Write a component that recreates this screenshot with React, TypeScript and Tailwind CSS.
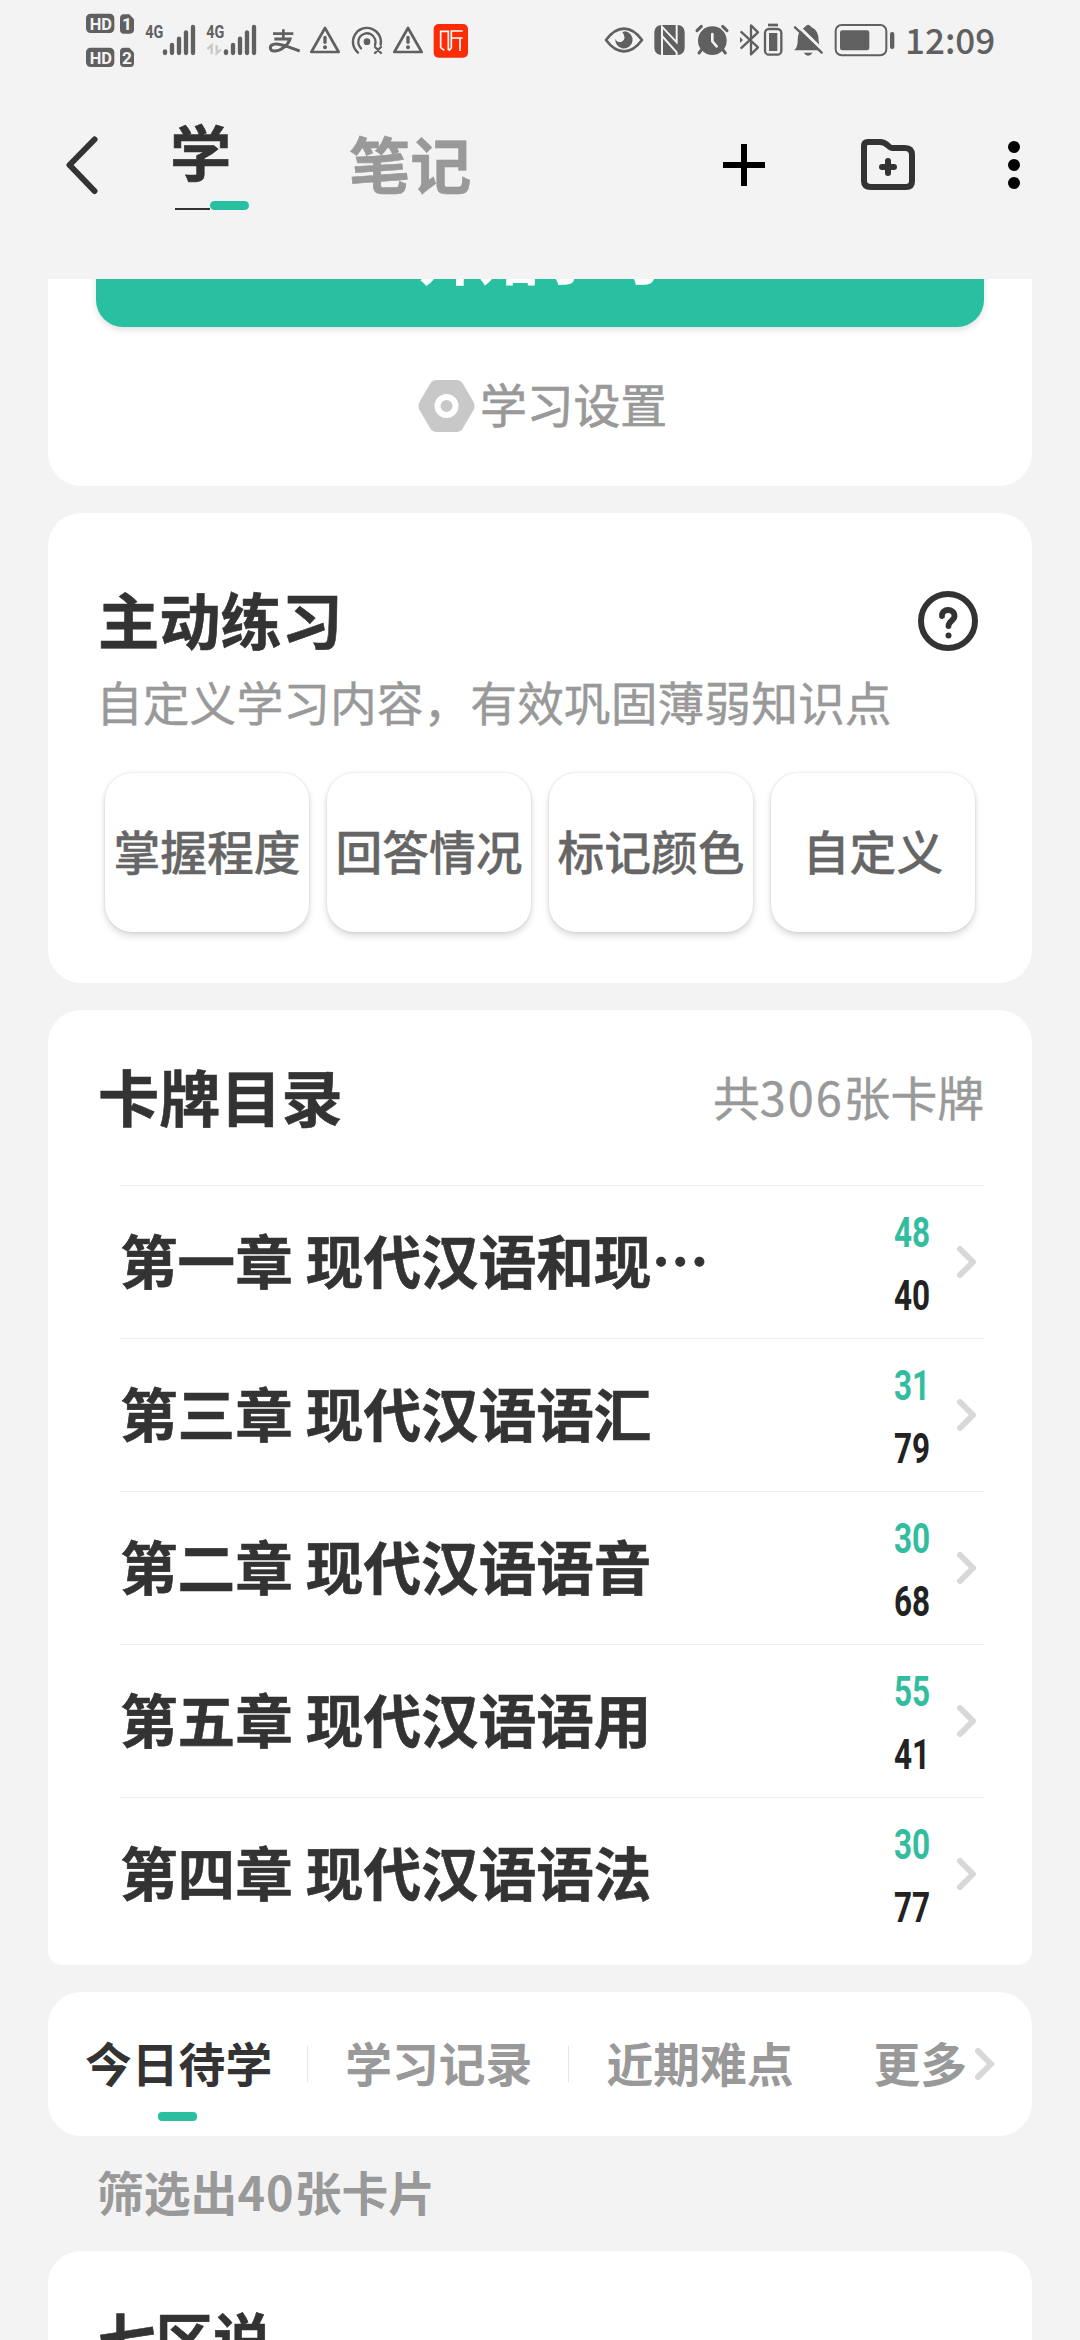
import type { ReactNode } from "react";

interface Chapter {
  title: string;
  known: number;
  left: number;
}

const chapters: Chapter[] = [
  { title: "第一章 现代汉语和现⋯", known: 48, left: 40 },
  { title: "第三章 现代汉语语汇", known: 31, left: 79 },
  { title: "第二章 现代汉语语音", known: 30, left: 68 },
  { title: "第五章 现代汉语语用", known: 55, left: 41 },
  { title: "第四章 现代汉语语法", known: 30, left: 77 },
];

const practiceModes = ["掌握程度", "回答情况", "标记颜色", "自定义"];

const signalBars = [
  { x: 315, top: 148 },
  { x: 336, top: 129 },
  { x: 357, top: 110 },
  { x: 378, top: 91 },
  { x: 399, top: 75 },
];

function SignalBars() {
  return (
    <g stroke="#606060" strokeWidth="13" strokeLinecap="round">
      {signalBars.map((bar) => (
        <line key={bar.x} x1={bar.x} x2={bar.x} y1={bar.top + 6} y2="159" />
      ))}
    </g>
  );
}

function Warning() {
  return (
    <svg className="h-[80px] w-[40px]" viewBox="735 0 120 240" fill="none" stroke="#606060">
      <path d="M795 84 L836 156 H754 Z" strokeWidth="8" strokeLinejoin="round" />
      <path d="M795 112 V127" strokeWidth="10" strokeLinecap="round" />
      <circle cx="795" cy="142" r="6" fill="#606060" stroke="none" />
    </svg>
  );
}

function StatusBar() {
  return (
    <div className="flex h-[80px] shrink-0 pl-[80px] text-[#606060]">
      <svg className="h-[80px] w-[60px]" viewBox="60 0 180 240" fontFamily="Roboto" fontWeight="700" fontSize="52">
        <rect x="78" y="41" width="85" height="58" rx="14" fill="#606060" />
        <path d="M192 43 H208 L222 58 V88 Q222 101 210 101 H192 Q180 101 180 89 V55 Q180 43 192 43 Z" fill="#606060" />
        <text x="89" y="89" fill="#f3f3f3" textLength="67" lengthAdjust="spacingAndGlyphs">HD</text>
        <text x="201" y="90" fill="#f3f3f3" textAnchor="middle">1</text>
        <rect x="78" y="143" width="85" height="58" rx="14" fill="#606060" />
        <path d="M192 143 H208 L222 158 V188 Q222 201 210 201 H192 Q180 201 180 189 V155 Q180 143 192 143 Z" fill="#606060" />
        <text x="89" y="191" fill="#f3f3f3" textLength="67" lengthAdjust="spacingAndGlyphs">HD</text>
        <text x="201" y="191" fill="#f3f3f3" textAnchor="middle">2</text>
      </svg>
      <svg className="h-[80px] w-[60px]" viewBox="240 0 180 240">
        <text x="256" y="114" fill="#606060" fontFamily="Roboto" fontWeight="700" fontSize="56" textLength="54" lengthAdjust="spacingAndGlyphs">4G</text>
        <SignalBars />
      </svg>
      <svg className="h-[80px] w-[63px]" viewBox="420 0 189 240">
        <text x="439" y="114" fill="#606060" fontFamily="Roboto" fontWeight="700" fontSize="56" textLength="54" lengthAdjust="spacingAndGlyphs">4G</text>
        <path d="M442 147 L455 136 V163 M470 136 V160 L483 149" fill="none" stroke="#c9c9c9" strokeWidth="7" />
        <g transform="translate(183 0)">
          <SignalBars />
        </g>
      </svg>
      <svg className="h-[80px] w-[42px]" viewBox="609 0 126 240" fill="none" stroke="#606060">
        <path d="M639 101 H700 M670 88 V117" strokeWidth="8" />
        <path d="M643 117 H690 C684 136 663 153 643 153 C628 153 627 137 640 133 C660 128 685 142 719 153" strokeWidth="9" />
      </svg>
      <Warning />
      <svg className="h-[80px] w-[43px]" viewBox="855 0 129 240" fill="none" stroke="#606060" strokeWidth="7" strokeLinecap="round">
        <circle cx="921" cy="125" r="10" fill="#606060" stroke="none" />
        <path d="M903 145 A26 26 0 1 1 945 135" />
        <path d="M894 158 A42 42 0 1 1 962 134" />
        <path d="M945 141 L963 159 M963 141 L945 159" />
      </svg>
      <Warning />
      <svg className="ml-[2px] h-[80px] w-[42px]" viewBox="1110 0 126 240" fill="none" stroke="#fff" strokeWidth="5">
        <rect x="1121" y="72" width="103" height="101" rx="15" fill="#fb2c06" stroke="none" />
        <path d="M1153 151 L1142 143 V94 H1165 V151 M1208 93 H1174 V143 L1167 152 M1174 114 H1208 M1200 114 V153" />
      </svg>

      <svg className="ml-[128px] h-[80px] w-[48px]" viewBox="60 0 144 240" fill="none" stroke="#606060">
        <path d="M78 120 Q103 86 132 86 Q161 86 186 120 Q161 154 132 154 Q103 154 78 120 Z" strokeWidth="8" strokeLinejoin="round" />
        <path d="M136 94 A26 26 0 1 1 106 116 Q110 128 124 126 Q142 118 127 96 Z" fill="#606060" stroke="none" />
      </svg>
      <svg className="h-[80px] w-[42px]" viewBox="204 0 126 240">
        <rect x="223" y="75" width="91" height="90" rx="21" fill="#606060" />
        <path d="M246 165 V80 L290 127 V75" fill="none" stroke="#f3f3f3" strokeWidth="6" />
        <path d="M246 108 L290 157 V165" fill="none" stroke="#f3f3f3" strokeWidth="6" />
      </svg>
      <svg className="h-[80px] w-[44px]" viewBox="330 0 132 240" fill="none" stroke="#606060" strokeWidth="9" strokeLinecap="round">
        <circle cx="397" cy="122" r="43" fill="#606060" stroke="none" />
        <path d="M351 92 L364 79 M441 92 L428 79 M363 151 L357 159 M430 151 L436 159" />
        <path d="M397 102 V124 L410 139" stroke="#f3f3f3" strokeWidth="8" />
      </svg>
      <svg className="h-[80px] w-[54px]" viewBox="462 0 162 240" fill="none" stroke="#606060" strokeWidth="7">
        <path d="M482 94 L534 142 L513 163 V76 L534 97 L482 146" strokeLinejoin="round" />
        <path d="M480 111 L489 120 L480 129 Z" fill="#606060" stroke="none" />
        <rect x="555" y="87" width="49" height="77" rx="12" />
        <path d="M564 75 H594" strokeWidth="8" />
        <rect x="567" y="99" width="25" height="54" fill="#606060" stroke="none" />
      </svg>
      <svg className="h-[80px] w-[40px]" viewBox="624 0 120 240">
        <path d="M642 151 Q653 143 653 123 Q652 91 674 82 Q684 66 695 82 Q716 91 716 122 Q717 142 727 151 Z M671 158 H698 Q684 176 671 158 Z" fill="#606060" />
        <path d="M650 74 L734 156" stroke="#f3f3f3" strokeWidth="9" />
        <path d="M645 82 L725 158" stroke="#606060" strokeWidth="7" strokeLinecap="round" />
      </svg>
      <svg className="h-[80px] w-[70px]" viewBox="744 0 210 240">
        <rect x="767" y="75" width="152" height="91" rx="18" fill="none" stroke="#606060" strokeWidth="6" />
        <rect x="780" y="91" width="88" height="60" rx="7" fill="#606060" />
        <rect x="930" y="96" width="13" height="51" rx="6" fill="#606060" />
      </svg>
      <span className="ml-[7px] text-[35px] leading-[77px] font-medium">12:09</span>
    </div>
  );
}

function Header() {
  return (
    <header className="flex h-[170px] shrink-0 items-center">
      <svg className="ml-[63px] h-[60px] w-[37px]" viewBox="0 0 37 60" fill="none" stroke="#333" strokeWidth="6" strokeLinecap="round" strokeLinejoin="round">
        <path d="M31.500 4.500 L6.500 30 L31.500 56" />
      </svg>
      <div className="relative ml-[70px] h-[90px] w-[79px]">
        <span className="block text-[61.200px] leading-[62px] font-bold text-[#333] [-webkit-text-stroke:0.6px]">学</span>
        <span className="absolute top-[88px] left-[5px] h-[2px] w-[35px] bg-[#333]" />
        <span className="absolute top-[81px] left-[40px] h-[9px] w-[39px] rounded-full bg-[#29bfa1]" />
      </div>
      <span className="ml-[100px] w-[122px] pb-[5px] text-[61.200px] leading-[60px] font-bold whitespace-nowrap text-[#999] [-webkit-text-stroke:0.6px]">笔记</span>
      <svg className="ml-[252px] h-[42px] w-[42px]" viewBox="0 0 42 42" stroke="#000" strokeWidth="6">
        <path d="M21 0 V42 M0 21 H42" />
      </svg>
      <svg className="ml-[96px] h-[52px] w-[54px]" viewBox="0 0 54 52" fill="none" stroke="#333" strokeWidth="6" strokeLinejoin="round">
        <path d="M7 3 H19 C27 3 27 9 31 9 H44 Q51 9 51 16 V42 Q51 48 45 48 H10 Q3 48 3 42 V7 Q3 3 7 3 Z" />
        <path d="M27 22 V34 M21 28 H33" strokeLinecap="round" />
      </svg>
      <svg className="ml-[93px] h-[48px] w-[12px]" viewBox="0 0 12 48">
        <circle cx="6" cy="6" r="6" />
        <circle cx="6" cy="24" r="6" />
        <circle cx="6" cy="42" r="6" />
      </svg>
    </header>
  );
}

function Chevron() {
  return (
    <svg className="h-[32px] w-[19px] shrink-0" viewBox="0 0 19 32" fill="none" stroke="#d8d8d8" strokeWidth="6" strokeLinecap="round" strokeLinejoin="round">
      <path d="M3 3 L16 16 L3 29" />
    </svg>
  );
}

function Title({ children }: { children: ReactNode }) {
  return (
    <h2 className="pb-[4px] text-[61.200px] leading-[68px] font-bold text-[#333] [-webkit-text-stroke:0.6px]">{children}</h2>
  );
}

function ChapterRow({ chapter }: { chapter: Chapter }) {
  return (
    <li className="flex h-[153px] items-center border-t border-[#efefef] pr-[8px] pb-[1px]">
      <span className="flex-1 pb-[5px] text-[57.600px] leading-[72px] font-bold whitespace-pre text-[#333] [-webkit-text-stroke:0.6px]">
        {chapter.title}
      </span>
      <div className="mr-[27px] flex origin-right scale-x-75 flex-col pt-[5px] text-right font-[Roboto] text-[42px] leading-[63px] font-bold">
        <span className="text-[#33bd9f]">{chapter.known}</span>
        <span className="text-[#222]">{chapter.left}</span>
      </div>
      <Chevron />
    </li>
  );
}

export default function App() {
  return (
    <div className="flex h-[2340px] w-[1080px] flex-col overflow-hidden bg-[#f3f3f3] font-['Noto_Sans_CJK_SC',sans-serif] text-[46.800px] leading-[60px]">
      <StatusBar />
      <Header />

      <main className="mt-[29px] flex min-h-0 flex-1 flex-col overflow-hidden px-[48px]">
        <section className="flex h-[207px] shrink-0 flex-col overflow-hidden rounded-b-[33px] bg-white px-[48px]">
          <button className="-mt-[90px] h-[138px] shrink-0 rounded-[27px] bg-[#29bfa1] pb-[9px] text-[61.200px] font-bold text-white shadow-[0_3px_6px_rgba(0,0,0,0.12)]">
            开始学习
          </button>
          <div className="mt-[46px] flex items-center justify-center pl-[5px] text-[#999] [-webkit-text-stroke:0.7px]">
            <svg className="mr-[5px] h-[54px] w-[57px]" viewBox="0 0 57 54">
              <path d="M19 1 H38 Q43 1 45 5 L55 22 Q58 27 55 32 L45 49 Q43 53 38 53 H19 Q14 53 12 49 L2 32 Q-1 27 2 22 L12 5 Q14 1 19 1 Z" fill="#c8c8c8" />
              <circle cx="28.500" cy="27" r="9" fill="none" stroke="#fff" strokeWidth="6" />
            </svg>
            <span className="pb-[5px]">学习设置</span>
          </div>
        </section>

        <section className="mt-[27px] h-[470px] shrink-0 rounded-[33px] bg-white px-[50px] pt-[72px]">
          <div className="flex items-center justify-between pr-[4px]">
            <Title>主动练习</Title>
            <svg className="h-[60px] w-[60px]" viewBox="0 0 60 60" fill="none" stroke="#333">
              <circle cx="30" cy="30" r="27" strokeWidth="6" />
              <path d="M24 25 C23.500 17 36.500 17 36.500 25 C36.500 29.500 30.500 30 30.500 35" strokeWidth="5.800" strokeLinecap="round" />
              <circle cx="30.500" cy="44.500" r="3" fill="#333" stroke="none" />
            </svg>
          </div>
          <p className="mt-[14px] -ml-[2px] text-[#999] [-webkit-text-stroke:0.4px]">自定义学习内容，有效巩固薄弱知识点</p>
          <div className="mt-[42px] grid grid-cols-4 gap-[18px] px-[7px]">
            {practiceModes.map((mode) => (
              <button
                key={mode}
                className="h-[159px] rounded-[27px] bg-white pb-[5px] font-medium whitespace-nowrap text-[#666] shadow-[0_0_3px_rgba(0,0,0,0.12),0_4px_7px_rgba(0,0,0,0.14)] [-webkit-text-stroke:0.3px]"
              >
                {mode}
              </button>
            ))}
          </div>
        </section>

        <section className="mt-[27px] h-[955px] shrink-0 rounded-t-[33px] rounded-b-[14px] bg-white pr-[48px] pl-[50px]">
          <div className="flex h-[175px] items-center justify-between">
            <Title>卡牌目录</Title>
            <span className="pb-[4px] text-[#999] [-webkit-text-stroke:0.4px]">
              共<span className="tracking-[2px]">306</span>张卡牌
            </span>
          </div>
          <ul className="pl-[22px]">
            {chapters.map((chapter) => (
              <ChapterRow key={chapter.title} chapter={chapter} />
            ))}
          </ul>
        </section>

        <nav className="mt-[27px] flex h-[144px] shrink-0 items-center rounded-[33px] bg-white pl-[37px] font-bold text-[#999]">
          <div className="relative pb-[5px] text-[#333]">
            今日待学
            <span className="absolute top-[80px] left-[73px] h-[9px] w-[39px] rounded-[4px] bg-[#29bfa1]" />
          </div>
          <span className="ml-[35px] h-[36px] w-px bg-[#e5e5e5]" />
          <span className="ml-[37px] pb-[5px]">学习记录</span>
          <span className="ml-[36px] h-[36px] w-px bg-[#e5e5e5]" />
          <span className="ml-[37px] pb-[5px]">近期难点</span>
          <span className="mr-[8px] ml-[80px] pb-[5px]">更多</span>
          <Chevron />
        </nav>

        <p className="mt-[25px] pl-[49px] font-bold text-[#999]">
          筛选出<span className="tracking-[1px]">40</span>张卡片
        </p>

        <section className="mt-[30px] h-[300px] shrink-0 rounded-t-[33px] bg-white px-[50px] pt-[50px]">
          <h3 className="text-[57.600px] leading-[72px] font-bold text-[#333] [-webkit-text-stroke:0.6px]">七区说</h3>
        </section>
      </main>
    </div>
  );
}
